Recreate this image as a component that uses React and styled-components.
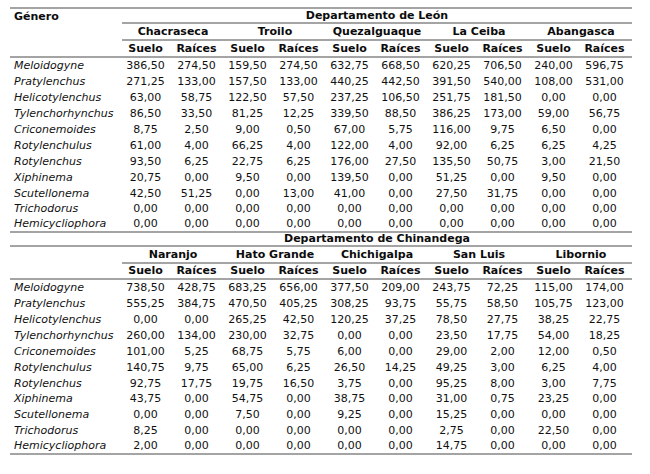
import styled, { createGlobalStyle } from "styled-components";

const GlobalStyle = createGlobalStyle`
  body {
    margin: 0;
    background: #ffffff;
    font-family: "DejaVu Sans", Verdana, sans-serif;
  }
`;

const RULE = "2px solid #a4a4a4";

const Page = styled.div`
  padding: 7px 0 0 10px;
`;

const Sheet = styled.div`
  display: grid;
  grid-template-columns: 112px repeat(5, 47px 55px);
  width: 622px;
  font-size: 11px;
  color: #111111;
`;

const Cell = styled.div`
  box-sizing: border-box;
  grid-column: span ${(p) => p.$span || 1};
  height: ${(p) => p.$h || 15.9}px;
  display: flex;
  align-items: center;
  justify-content: ${(p) => (p.$left ? "flex-start" : "center")};
  padding-left: ${(p) => (p.$left ? "4px" : "0")};
  white-space: nowrap;
  border-top: ${(p) => (p.$top ? RULE : "none")};
  border-bottom: ${(p) => (p.$rule ? RULE : "none")};
`;

const Head = styled(Cell)`
  font-weight: bold;
  color: #0c0c0c;
`;

const Genus = styled(Cell)`
  font-style: italic;
`;

const LEON = {
  dept: "Departamento de León",
  towns: ["Chacraseca", "Troilo", "Quezalguaque", "La Ceiba", "Abangasca"],
  rows: [
    ["Meloidogyne", "386,50 274,50 159,50 274,50 632,75 668,50 620,25 706,50 240,00 596,75"],
    ["Pratylenchus", "271,25 133,00 157,50 133,00 440,25 442,50 391,50 540,00 108,00 531,00"],
    ["Helicotylenchus", "63,00 58,75 122,50 57,50 237,25 106,50 251,75 181,50 0,00 0,00"],
    ["Tylenchorhynchus", "86,50 33,50 81,25 12,25 339,50 88,50 386,25 173,00 59,00 56,75"],
    ["Criconemoides", "8,75 2,50 9,00 0,50 67,00 5,75 116,00 9,75 6,50 0,00"],
    ["Rotylenchulus", "61,00 4,00 66,25 4,00 122,00 4,00 92,00 6,25 6,25 4,25"],
    ["Rotylenchus", "93,50 6,25 22,75 6,25 176,00 27,50 135,50 50,75 3,00 21,50"],
    ["Xiphinema", "20,75 0,00 9,50 0,00 139,50 0,00 51,25 0,00 9,50 0,00"],
    ["Scutellonema", "42,50 51,25 0,00 13,00 41,00 0,00 27,50 31,75 0,00 0,00"],
    ["Trichodorus", "0,00 0,00 0,00 0,00 0,00 0,00 0,00 0,00 0,00 0,00"],
    ["Hemicycliophora", "0,00 0,00 0,00 0,00 0,00 0,00 0,00 0,00 0,00 0,00"],
  ],
};

const CHINANDEGA = {
  dept: "Departamento de Chinandega",
  towns: ["Naranjo", "Hato Grande", "Chichigalpa", "San Luis", "Libornio"],
  rows: [
    ["Meloidogyne", "738,50 428,75 683,25 656,00 377,50 209,00 243,75 72,25 115,00 174,00"],
    ["Pratylenchus", "555,25 384,75 470,50 405,25 308,25 93,75 55,75 58,50 105,75 123,00"],
    ["Helicotylenchus", "0,00 0,00 265,25 42,50 120,25 37,25 78,50 27,75 38,25 22,75"],
    ["Tylenchorhynchus", "260,00 134,00 230,00 32,75 0,00 0,00 23,50 17,75 54,00 18,25"],
    ["Criconemoides", "101,00 5,25 68,75 5,75 6,00 0,00 29,00 2,00 12,00 0,50"],
    ["Rotylenchulus", "140,75 9,75 65,00 6,25 26,50 14,25 49,25 3,00 6,25 4,00"],
    ["Rotylenchus", "92,75 17,75 19,75 16,50 3,75 0,00 95,25 8,00 3,00 7,75"],
    ["Xiphinema", "43,75 0,00 54,75 0,00 38,75 0,00 31,00 0,75 23,25 0,00"],
    ["Scutellonema", "0,00 0,00 7,50 0,00 9,25 0,00 15,25 0,00 0,00 0,00"],
    ["Trichodorus", "8,25 0,00 0,00 0,00 0,00 0,00 2,75 0,00 22,50 0,00"],
    ["Hemicycliophora", "2,00 0,00 0,00 0,00 0,00 0,00 14,75 0,00 0,00 0,00"],
  ],
};

function Block({ data, first }) {
  const last = data.rows.length - 1;
  const subH = first ? 17 : 16;
  return (
    <>
      {first ? (
        <>
          <Head $left $top $h={17}>Género</Head>
          <Head $span={10} $top $rule $h={17}>{data.dept}</Head>
        </>
      ) : (
        <>
          <Cell $rule $h={14}></Cell>
          <Head $span={10} $rule $h={14}>{data.dept}</Head>
        </>
      )}
      <Cell $h={17}></Cell>
      {data.towns.map((t) => (
        <Head key={t} $span={2} $rule $h={17}>{t}</Head>
      ))}
      <Cell $rule $h={subH}></Cell>
      {data.towns.map((t) => (
        <>
          <Head key={t + "s"} $rule $h={subH}>Suelo</Head>
          <Head key={t + "r"} $rule $h={subH}>Raíces</Head>
        </>
      ))}
      {data.rows.map(([name, vals], i) => (
        <>
          <Genus key={name} $left $rule={i === last}>{name}</Genus>
          {vals.split(" ").map((v, j) => (
            <Cell key={name + j} $rule={i === last}>{v}</Cell>
          ))}
        </>
      ))}
    </>
  );
}

export default function App() {
  return (
    <Page>
      <GlobalStyle />
      <Sheet>
        <Block data={LEON} first />
        <Block data={CHINANDEGA} />
      </Sheet>
    </Page>
  );
}
